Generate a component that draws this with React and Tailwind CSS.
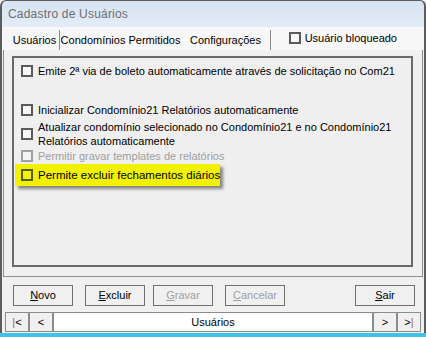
import React from "react";

const font = { fontFamily: '"Liberation Sans", Arial, sans-serif' };

function Box({ disabled, yellow }) {
  return (
    <span
      className={
        "inline-block w-[12px] h-[12px] border-2 shrink-0 " +
        (yellow
          ? "border-[#5b5b1f] bg-[#f4f400]"
          : disabled
          ? "border-[#a0a0a0] bg-[#f4f4f4]"
          : "border-[#5a5a5a] bg-[#f7f7f7]")
      }
    />
  );
}

function Btn({ children, disabled, className = "" }) {
  return (
    <div
      className={
        "h-[21px] w-[60px] border border-[#707070] bg-[#f0f0f0] flex items-center justify-center text-[11px] " +
        (disabled ? "text-[#a0a0a0] " : "text-black ") +
        className
      }
    >
      {children}
    </div>
  );
}

function Row({ children, className = "", disabled }) {
  return (
    <div className={"flex items-center gap-[5px] ml-[7px] whitespace-nowrap " + (disabled ? "text-[#a0a0a0] " : "") + className}>
      {children}
    </div>
  );
}

export default function App() {
  return (
    <div
      className="w-[426px] h-[337px] bg-[#f0f0f0] overflow-hidden flex flex-col"
      style={font}
    >
      {/* title bar */}
      <div className="h-[27px] shrink-0 rounded-tl-[6px] rounded-tr-[6px] border-t border-l-2 border-r-2 border-[#5c5c5c] bg-gradient-to-b from-[#d6e3f2] to-[#e4edf8] flex items-center pl-[6px]">
        <span className="text-[12px] text-[#6e6e6e] tracking-[0.2px]">Cadastro de Usuários</span>
      </div>
      {/* body */}
      <div className="flex-1 flex flex-col border-l-2 border-r-2 border-[#5c5c5c]">
        {/* tab strip */}
        <div className="h-[23px] shrink-0 bg-[#f7f7f7] flex items-end pl-[8px]">
          <div className="flex items-stretch h-[20px] text-[11px] text-black whitespace-nowrap">
            <div className="w-[50px] flex items-center justify-center border-r border-[#8a8a8a]">Usuários</div>
            <div className="w-[121px] flex items-center justify-center">Condomínios Permitidos</div>
            <div className="w-[90px] flex items-center justify-center bg-[#f7f7f7] border-r border-[#8a8a8a]">Configurações</div>
          </div>
          <div className="ml-auto mr-[27px] mb-[4px] flex items-center gap-[4px] text-[11px] whitespace-nowrap">
            <Box />
            <span>Usuário bloqueado</span>
          </div>
        </div>
        {/* tab page */}
        <div className="h-[227px] shrink-0 border-l border-r border-b border-[#8c8c8c] mx-[1px] pl-[8px] pr-[9px] pt-[6px] pb-[9px] flex flex-col bg-[#f0f0f0]">
          <div className="flex-1 border-2 border-[#6a6a6a] bg-[#efefef] text-[11px] text-black flex flex-col pt-[6px] leading-[14px]">
            <Row>
              <Box />
              <span>Emite 2ª via de boleto automaticamente através de solicitação no Com21</span>
            </Row>
            <Row className="mt-[25px]">
              <Box />
              <span>Inicializar Condomínio21 Relatórios automaticamente</span>
            </Row>
            <Row className="mt-[3px]">
              <Box />
              <span>
                Atualizar condomínio selecionado no Condomínio21 e no Condomínio21
                <br />
                Relatórios automaticamente
              </span>
            </Row>
            <Row className="mt-[1px]" disabled>
              <Box disabled />
              <span>Permitir gravar templates de relatórios</span>
            </Row>
            <div className="mt-[1px] ml-[1px] w-[205px] h-[22px] bg-[#f2f200] shadow-[3px_3px_3px_rgba(0,0,0,0.45)] flex items-center pl-[6px] gap-[5px] whitespace-nowrap">
              <Box yellow />
              <span className="text-[11.5px]">Permite excluir fechamentos diários</span>
            </div>
          </div>
        </div>
        {/* buttons */}
        <div className="h-[35px] shrink-0 flex items-center pl-[11px] pr-[9px] pt-[1px]">
          <Btn><span><u>N</u>ovo</span></Btn>
          <Btn className="ml-[12px]"><span><u>E</u>xcluir</span></Btn>
          <Btn disabled className="ml-[8px]"><span><u>G</u>ravar</span></Btn>
          <Btn disabled className="ml-[12px]"><span><u>C</u>ancelar</span></Btn>
          <Btn className="ml-auto"><span><u>S</u>air</span></Btn>
        </div>
        {/* nav */}
        <div className="h-[20px] shrink-0 mx-[3px] flex text-[11px]">
          <div className="w-[24px] border border-[#8c8c8c] flex items-center justify-center"><span className="text-[#b5651d]">|</span>&lt;</div>
          <div className="w-[24px] border border-[#8c8c8c] flex items-center justify-center">&lt;</div>
          <div className="flex-1 bg-white border border-[#8c8c8c] flex items-center justify-center">Usuários</div>
          <div className="w-[24px] border border-[#8c8c8c] flex items-center justify-center">&gt;</div>
          <div className="w-[24px] border border-[#8c8c8c] flex items-center justify-center">&gt;<span className="text-[#b5651d]">|</span></div>
        </div>
        <div className="flex-1" />
      </div>
      <div className="h-[4px] shrink-0 bg-[#3cc4e8]" />
    </div>
  );
}
